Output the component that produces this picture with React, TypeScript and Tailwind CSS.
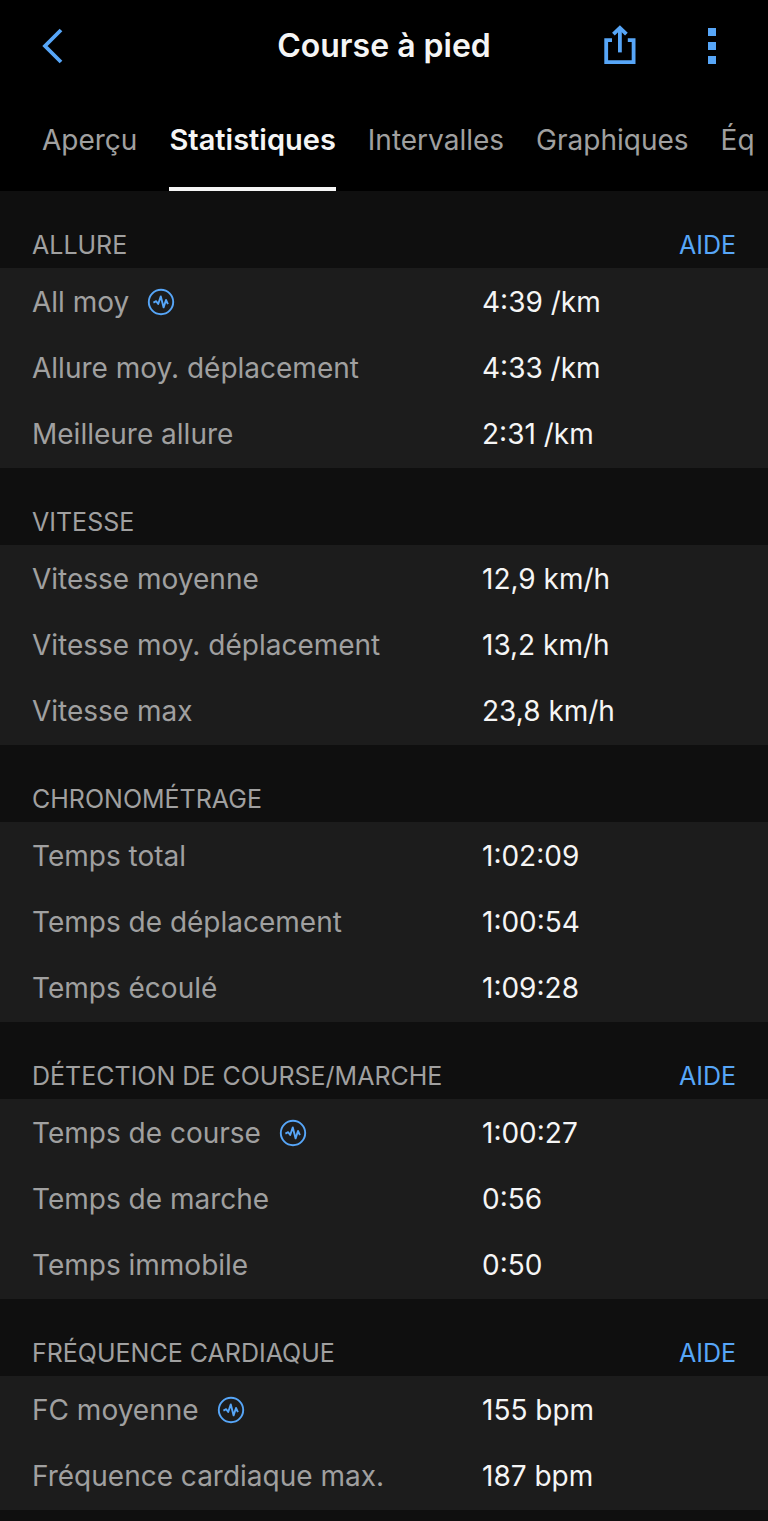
import { useState } from 'react';
import clsx from 'clsx';

type Stat = { label: string; value: string; pulse?: boolean };
type StatGroup = { title: string; help?: boolean; stats: Stat[] };

const tabs = ['Aperçu', 'Statistiques', 'Intervalles', 'Graphiques', 'Éq'];

const groups: StatGroup[] = [
    {
        title: 'ALLURE',
        help: true,
        stats: [
            { label: 'All moy', value: '4:39 /km', pulse: true },
            { label: 'Allure moy. déplacement', value: '4:33 /km' },
            { label: 'Meilleure allure', value: '2:31 /km' },
        ],
    },
    {
        title: 'VITESSE',
        stats: [
            { label: 'Vitesse moyenne', value: '12,9 km/h' },
            { label: 'Vitesse moy. déplacement', value: '13,2 km/h' },
            { label: 'Vitesse max', value: '23,8 km/h' },
        ],
    },
    {
        title: 'CHRONOMÉTRAGE',
        stats: [
            { label: 'Temps total', value: '1:02:09' },
            { label: 'Temps de déplacement', value: '1:00:54' },
            { label: 'Temps écoulé', value: '1:09:28' },
        ],
    },
    {
        title: 'DÉTECTION DE COURSE/MARCHE',
        help: true,
        stats: [
            { label: 'Temps de course', value: '1:00:27', pulse: true },
            { label: 'Temps de marche', value: '0:56' },
            { label: 'Temps immobile', value: '0:50' },
        ],
    },
    {
        title: 'FRÉQUENCE CARDIAQUE',
        help: true,
        stats: [
            { label: 'FC moyenne', value: '155 bpm', pulse: true },
            { label: 'Fréquence cardiaque max.', value: '187 bpm' },
        ],
    },
];

function BackIcon() {
    return (
        <svg width="22" height="36" viewBox="0 0 22 36" fill="none" stroke="currentColor" strokeWidth="3.8">
            <path d="M20 2 4 18l16 16" />
        </svg>
    );
}

function ShareIcon() {
    return (
        <svg width="32" height="42" viewBox="0 0 32 42" fill="none" stroke="currentColor" strokeWidth="3.8">
            <path d="M8 15.2H2.2v21.9h27.4V15.2h-5.8" />
            <path d="M15.9 27.4V3" />
            <path d="m9.4 9.2 6.5-6.4 6.5 6.4" />
        </svg>
    );
}

function MoreIcon() {
    return (
        <svg width="8" height="36" viewBox="0 0 8 36" fill="currentColor">
            <path d="M0 0h8v8H0zM0 14h8v8H0zM0 28h8v8H0z" />
        </svg>
    );
}

function PulseIcon() {
    return (
        <svg className="shrink-0 text-[#57a6f8]" width="28" height="28" viewBox="0 0 28 28" fill="none" stroke="currentColor">
            <circle cx="14" cy="14" r="12.2" strokeWidth="1.9" />
            <path
                d="M6.4 14.6 9.2 13.2l2 2.8L13.8 8.4l2.8 11 2.4-7.4 1.9 4.2"
                strokeWidth="1.9"
                strokeLinejoin="round"
            />
        </svg>
    );
}

function StatSection({ group }: { group: StatGroup }) {
    return (
        <section>
            <div className="flex h-[77px] items-end justify-between px-8 pb-1 text-[25px]">
                <h2 className="text-[#a0a0a0]">{group.title}</h2>
                {group.help && (
                    <a href="#aide" className="text-[#57a6f8]">
                        AIDE
                    </a>
                )}
            </div>
            <dl className="bg-[#1c1c1c] py-px text-[28px]">
                {group.stats.map((stat) => (
                    <div key={stat.label} className="flex h-[66px] items-center">
                        <dt className="flex w-5/8 items-center gap-[18px] pl-8 text-[#a0a0a0]">
                            {stat.label}
                            {stat.pulse && <PulseIcon />}
                        </dt>
                        <dd className="pl-0.5 text-[#f5f5f5]">{stat.value}</dd>
                    </div>
                ))}
            </dl>
        </section>
    );
}

export default function App() {
    const [activeTab, setActiveTab] = useState('Statistiques');

    return (
        <div className="min-h-screen overflow-hidden bg-[#0f0f0f] pb-3 font-['Inter',sans-serif]">
            <header className="bg-black">
                {/* Title bar */}
                <div className="grid h-[92px] grid-cols-[1fr_auto_1fr] items-center px-8">
                    <button aria-label="Retour" className="flex h-12 w-10 items-center justify-center text-[#57a6f8]">
                        <BackIcon />
                    </button>
                    <h1 className="text-[32px] font-semibold text-[#f5f5f5]">Course à pied</h1>
                    <div className="flex justify-end gap-11 text-[#57a6f8]">
                        <button aria-label="Partager" className="flex size-12 items-center justify-center">
                            <ShareIcon />
                        </button>
                        <button aria-label="Plus" className="flex size-12 items-center justify-center">
                            <MoreIcon />
                        </button>
                    </div>
                </div>

                {/* Tabs */}
                <nav className="flex h-[99px] gap-8 overflow-hidden pl-[42px]">
                    {tabs.map((tab) => (
                        <button
                            key={tab}
                            onClick={() => setActiveTab(tab)}
                            className={clsx(
                                'shrink-0 border-b-4',
                                tab === activeTab
                                    ? 'border-[#f5f5f5] text-[29px] font-semibold text-[#f5f5f5]'
                                    : 'border-transparent text-[28px] text-[#a0a0a0]'
                            )}
                        >
                            {tab}
                        </button>
                    ))}
                </nav>
            </header>

            <main>
                {groups.map((group) => (
                    <StatSection key={group.title} group={group} />
                ))}
            </main>
        </div>
    );
}
